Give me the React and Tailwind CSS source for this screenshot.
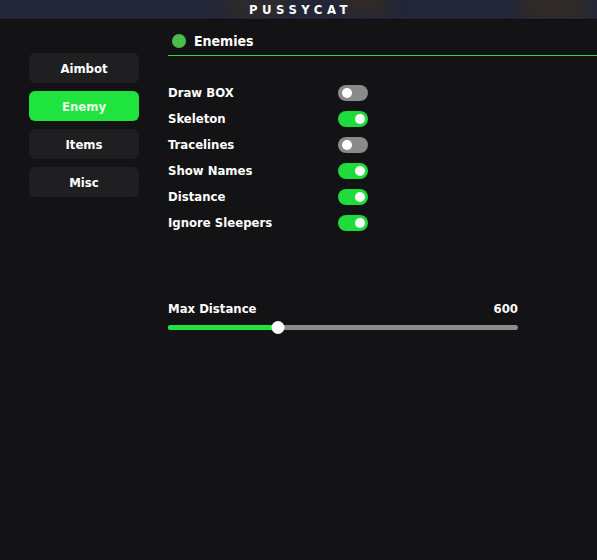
import React, { useState } from 'react';

const TABS = ['Aimbot', 'Enemy', 'Items', 'Misc'];

const OPTIONS = [
  { key: 'box', label: 'Draw BOX', on: false },
  { key: 'skeleton', label: 'Skeleton', on: true },
  { key: 'tracelines', label: 'Tracelines', on: false },
  { key: 'names', label: 'Show Names', on: true },
  { key: 'distance', label: 'Distance', on: true },
  { key: 'sleepers', label: 'Ignore Sleepers', on: true },
];

const Toggle = ({ on, onClick }) => (
  <button
    onClick={onClick}
    className={`relative h-[16px] w-[30px] rounded-full ${on ? 'bg-[#1fdc3c]' : 'bg-[#8a8a8a]'}`}
  >
    <span
      className={`absolute top-[3px] h-[10px] w-[10px] rounded-full bg-white ${on ? 'left-[17px]' : 'left-[4px]'}`}
    />
  </button>
);

export default function App() {
  const [tab, setTab] = useState('Enemy');
  const [opts, setOpts] = useState(() =>
    Object.fromEntries(OPTIONS.map(o => [o.key, o.on]))
  );
  const maxDistance = 600;
  const pct = 31.4;

  return (
    <div
      className="flex h-[560px] w-[597px] flex-col overflow-hidden bg-[#131215] text-white"
      style={{ fontFamily: '"DejaVu Sans Condensed", "DejaVu Sans", sans-serif' }}
    >
      {/* title bar, game scene showing faintly behind it */}
      <div className="relative flex h-[20px] items-center justify-center overflow-hidden border-b border-[#0d0d12] bg-[#222637]">
        <span className="absolute left-[225px] top-[-6px] h-[24px] w-[60px] rounded-full bg-[#2f2a2a] blur-[6px]" />
        <span className="absolute left-[340px] top-[-8px] h-[22px] w-[50px] rounded-full bg-[#302a28] blur-[6px]" />
        <span className="absolute left-[520px] top-[-6px] h-[26px] w-[70px] rounded-full bg-[#312b27] blur-[7px]" />
        <span className="relative pl-[4px] text-[13px] font-bold tracking-[4.5px]">PUSSYCAT</span>
      </div>

      <div className="flex flex-1">
        {/* tabs */}
        <div className="flex w-[168px] flex-col gap-[8px] pl-[29px] pt-[33px]">
          {TABS.map(t => (
            <button
              key={t}
              onClick={() => setTab(t)}
              className={`h-[30px] w-[110px] rounded-[6px] pt-[2px] text-[13px] font-bold ${
                tab === t ? 'bg-[#1fe43d] text-[#eefbe9]' : 'bg-[#1f1f21] text-white'
              }`}
            >
              {t}
            </button>
          ))}
        </div>

        {/* content */}
        <div className="flex flex-1 flex-col pt-[11px]">
          <div className="flex h-[24px] items-center gap-[8px] pb-[4px] pl-[4px]">
            <span className="h-[14px] w-[14px] rounded-full bg-[#4cbc4c]" />
            <span className="text-[14px] font-bold">Enemies</span>
          </div>
          <div className="h-px bg-[#3fcf3f]" />

          <div className="flex w-[200px] flex-col pt-[24px]">
            {OPTIONS.map(o => (
              <div key={o.key} className="flex h-[26px] items-center justify-between">
                <span className="text-[13px] font-bold">{o.label}</span>
                <Toggle
                  on={opts[o.key]}
                  onClick={() => setOpts(s => ({ ...s, [o.key]: !s[o.key] }))}
                />
              </div>
            ))}
          </div>

          <div className="mt-[63px] flex w-[350px] flex-col">
            <div className="flex items-center justify-between text-[13px] font-bold">
              <span>Max Distance</span>
              <span>{maxDistance}</span>
            </div>
            <div className="relative mt-[6px] h-[5px] rounded-full bg-[#8c8c8c]">
              <div className="h-full rounded-full bg-[#1fe43d]" style={{ width: `${pct}%` }} />
              <span
                className="absolute top-[-4px] h-[13px] w-[13px] -translate-x-1/2 rounded-full bg-white"
                style={{ left: `${pct}%` }}
              />
            </div>
          </div>
        </div>
      </div>
    </div>
  );
}
